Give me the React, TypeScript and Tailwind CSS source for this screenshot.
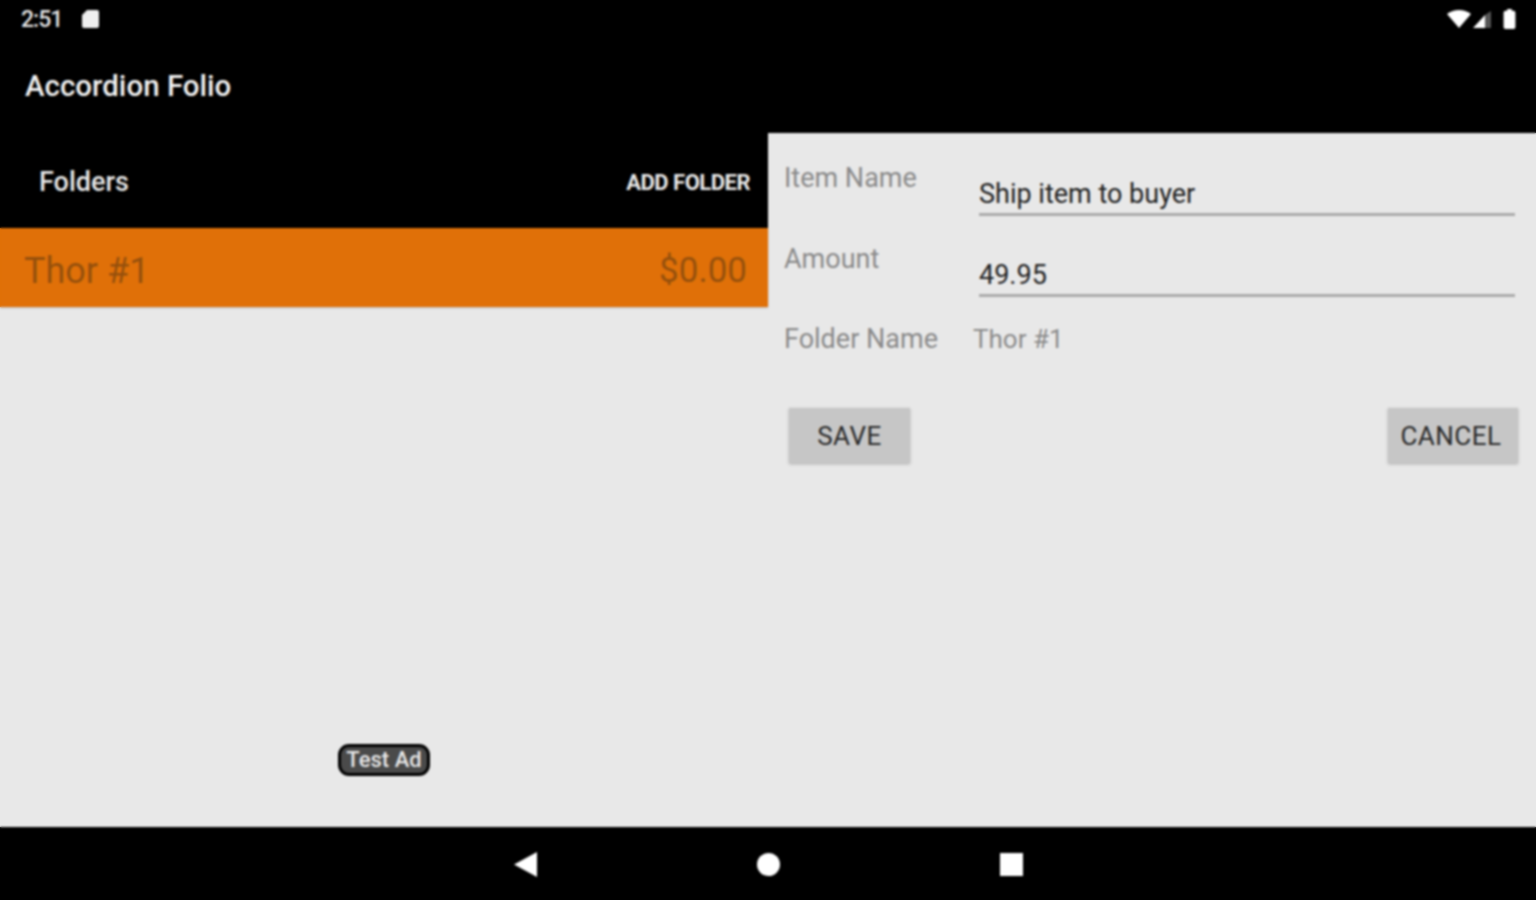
import * as React from 'react';

function FormRow({ label, value }: { label: string; value: string }) {
  return (
    <div className="flex h-[81px]">
      <span className="w-[195px] pt-[30px] text-[27px] leading-[30px] text-[#8a8a8a]">{label}</span>
      <div className="flex-1 h-[68px] mt-[15px] mr-[21px] border-b-[3px] border-[#ababab] pt-[31px]">
        <span className="block text-[27px] leading-[30px] text-[#222222]">{value}</span>
      </div>
    </div>
  );
}

export default function App() {
  return (
    <div className="relative w-[1536px] h-[900px] flex flex-col bg-black overflow-hidden font-['Roboto',sans-serif]">
      <div className="h-[36px] flex items-center justify-between pl-[21px] pr-[20px] pt-[2px] text-white">
        <div className="flex items-center gap-[20px]">
          <span className="text-[23px] font-medium leading-none tracking-[-1px] text-[#e6e6e6]">2:51</span>
          <svg width="17" height="18" viewBox="0 0 17 18" fill="#f0f0f0">
            <path d="M5 0h10a2 2 0 0 1 2 2v14a2 2 0 0 1-2 2H2a2 2 0 0 1-2-2V5z" />
          </svg>
        </div>
        <div className="flex items-center">
          <svg width="24" height="18" viewBox="0 0 24 18" fill="#fff">
            <path d="M0 4 C7-1.3 17-1.3 24 4 L12 18z" />
          </svg>
          <svg width="18" height="17" viewBox="0 0 18 17" className="ml-[2px]">
            <path d="M0 17 L12 4 V17z" fill="#fff" />
            <path d="M12 4 L18 0 V17 H12z" fill="#555" />
          </svg>
          <svg width="13" height="20" viewBox="0 0 13 22" fill="#fff" className="ml-[12px]">
            <path d="M4 2V0h5v2h2a2 2 0 0 1 2 2v16a2 2 0 0 1-2 2H2a2 2 0 0 1-2-2V4a2 2 0 0 1 2-2z" />
          </svg>
        </div>
      </div>

      <div className="h-[97px] flex items-center pl-[25px] pt-[4px]">
        <span className="text-[29.5px] font-medium text-[#f2f2f2]">Accordion Folio</span>
      </div>

      <div className="h-[694px] flex bg-[#e8e8e8]">
        <div className="w-[768px] flex flex-col">
          <div className="h-[95px] bg-black flex items-center justify-between pl-[39px] pr-[18px] pt-[4px]">
            <span className="text-[27px] font-medium text-[#e8e8e8]">Folders</span>
            <span className="text-[22px] font-bold tracking-[-0.5px] text-[#e8e8e8]">ADD FOLDER</span>
          </div>
          <div className="h-[79px] bg-[#e07008] flex items-center justify-between pl-[24px] pr-[21px] pt-[6px] text-[36px] text-[#96500c] shadow-[0_1px_2px_rgba(0,0,0,0.2)]">
            <span>Thor #1</span>
            <span className="text-[35px] pt-[2px]">$0.00</span>
          </div>
          <div className="flex-1 flex items-end justify-center pb-[51px]">
            <span className="h-[32px] w-[92px] flex items-center justify-center rounded-[11px] border-[3px] border-black bg-[#4a4a4a] text-[22px] font-medium leading-none text-[#e8e8e8]">
              Test Ad
            </span>
          </div>
        </div>

        <div className="flex-1 pl-[16px]">
          <FormRow label="Item Name" value="Ship item to buyer" />
          <FormRow label="Amount" value="49.95" />
          <div className="flex h-[88px] items-center text-[27px] text-[#8a8a8a]">
            <span className="w-[189px]">Folder Name</span>
            <span className="text-[26px]">Thor #1</span>
          </div>
          <div className="flex justify-between pl-[5px] pr-[18px] pt-[25px]">
            <button className="w-[121px] h-[55px] pt-[2px] bg-[#c6c6c6] text-[26px] tracking-[0.5px] text-[#2a2a2a] shadow-[0_1px_3px_rgba(0,0,0,0.25)]">
              SAVE
            </button>
            <button className="w-[130px] h-[55px] pt-[2px] pr-[4px] bg-[#c6c6c6] text-[26px] tracking-[0.5px] text-[#2a2a2a] shadow-[0_1px_3px_rgba(0,0,0,0.25)]">
              CANCEL
            </button>
          </div>
        </div>
      </div>

      <div className="flex-1 flex items-center justify-center gap-[220px] pt-[2px]">
        <svg width="23" height="25" viewBox="0 0 23 25" fill="#fff">
          <path d="M23 0V25L0 12.5z" />
        </svg>
        <span className="w-[23px] h-[23px] rounded-full bg-white" />
        <span className="w-[23px] h-[23px] bg-white" />
      </div>

      {/* the screenshot is an upscaled capture, so soften everything under this layer */}
      <div className="absolute inset-0 backdrop-blur-[1px] pointer-events-none" />
    </div>
  );
}
